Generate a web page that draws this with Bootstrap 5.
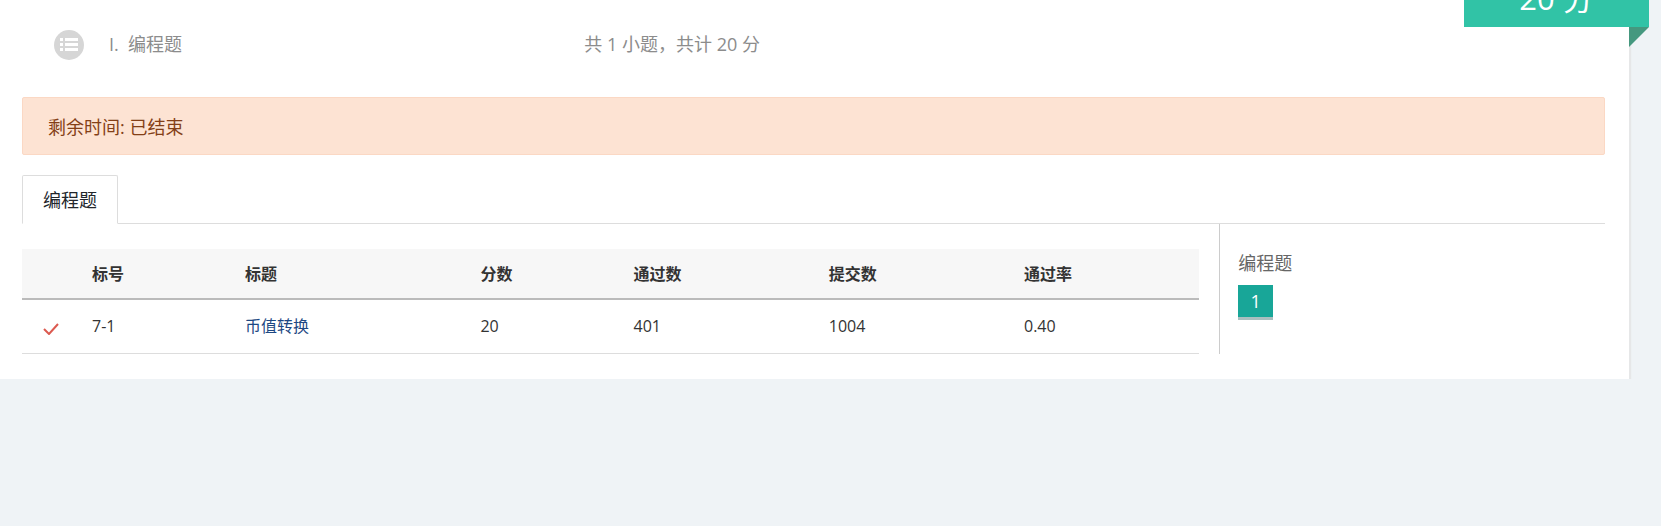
<!DOCTYPE html>
<html lang="zh-CN">
<head>
<meta charset="utf-8">
<meta name="viewport" content="width=device-width, initial-scale=1">
<title>编程题</title>
<link rel="stylesheet" href="https://cdn.jsdelivr.net/npm/bootstrap@5.3.0/dist/css/bootstrap.min.css">
<style>
body { background: #eff3f6; color: #333; font-family: "Open Sans", "Noto Sans CJK SC", sans-serif; font-size: 18px; line-height: 26px; overflow-x: hidden; }
.panel { background: #fff; margin-right: 32px; padding: 0 24px 25px 22px; box-shadow: 1px 1px 1px 1px #e6e7e8; }
.ribbon { top: -31px; right: -20px; width: 185px; height: 58px; background: #31c3a6; font-size: 31px; }
.ribbon::after { content: ""; position: absolute; top: 100%; right: 0; border: 10px solid transparent; border-top-color: #45987f; border-left-color: #45987f; }
.section-head { padding: 29px 32px 37px; color: #8c8c8c; line-height: 31px; }
.section-name { margin-left: 25px; }
.notice { padding: 16px 25px 14px; background: #fde3d3; border-color: #fbd8c4; border-radius: 2px; color: #843f17; margin-bottom: 20px; }
.nav-tabs { --bs-nav-tabs-border-radius: 2px; --bs-nav-tabs-border-color: #ddd; --bs-nav-tabs-link-active-border-color: #ddd #ddd #fff; }
.nav-tabs .nav-link { padding: 11px 20px 10px; }
.nav-tabs .nav-link.active { color: #22262b; }
.panes { --bs-gutter-x: 40px; }
.list-pane { padding-top: 25px; }
.problems { table-layout: fixed; font-size: 16px; color: #333; }
.problems > :not(caption) > * > * { padding: 12px 20px; color: #333; }
.problems thead th { background: #f7f7f7; height: 50px; border-bottom: 2px solid #bbb; line-height: 24px; }
.problems tbody td { height: 54px; border-bottom: 1px solid #ddd; line-height: 24px; padding-top: 14px; }
.problems a { color: #1d4883; }
.c-mark { width: 50px; } .c-no { width: 13%; } .c-title { width: 20%; }
.side { border-left: 1px solid #ccc; padding: 26px 18px 0; color: #666; }
.num-btn { width: 35px; height: 35px; margin-top: 9px; background: #18a698; border-bottom: 3px solid #a9bfbf; color: #fff; font-size: 18px; line-height: 32px; }
</style>
</head>
<body>
<main class="panel position-relative">
  <div class="ribbon position-absolute d-flex align-items-center justify-content-center text-white">20 分</div>
  <header class="section-head">
    <div class="row g-0">
      <div class="col-4 d-flex align-items-center">
        <svg width="30" height="30" viewBox="0 0 30 30" aria-hidden="true"><circle cx="15" cy="15" r="15" fill="#d6d6d6"/><path fill="#fff" d="M6 8h3v3H6zM11 8h13v3H11zM6 13h3v3H6zM11 13h13v3H11zM6 18h3v3H6zM11 18h13v3H11z"/></svg>
        <span class="section-name">I.&nbsp; 编程题</span>
      </div>
      <div class="col-8 ps-4">共 1 小题，共计 20 分</div>
    </div>
  </header>
  <div class="alert notice" role="alert">剩余时间: 已结束</div>
  <ul class="nav nav-tabs">
    <li class="nav-item"><a class="nav-link active" href="#programming">编程题</a></li>
  </ul>
  <div class="row panes" id="programming">
    <div class="col-9 list-pane">
      <table class="table problems mt-0 mb-0">
        <colgroup><col class="c-mark"><col class="c-no"><col class="c-title"><col class="c-no"><col><col><col></colgroup>
        <thead><tr><th></th><th>标号</th><th>标题</th><th>分数</th><th>通过数</th><th>提交数</th><th>通过率</th></tr></thead>
        <tbody><tr>
          <td class="pe-0"><svg width="18" height="14" viewBox="0 0 18 14" aria-hidden="true"><path d="M2 8l5 5L16 3" fill="none" stroke="#dc5a50" stroke-width="2"/></svg></td>
          <td>7-1</td><td><a class="text-decoration-none" href="#p1">币值转换</a></td><td>20</td><td>401</td><td>1004</td><td>0.40</td>
        </tr></tbody>
      </table>
    </div>
    <aside class="col-3 side">
      <div>编程题</div>
      <button type="button" class="btn num-btn rounded-0 border-top-0 border-start-0 border-end-0 p-0 d-block">1</button>
    </aside>
  </div>
</main>
<script src="https://cdn.jsdelivr.net/npm/bootstrap@5.3.0/dist/js/bootstrap.bundle.min.js"></script>
</body>
</html>
